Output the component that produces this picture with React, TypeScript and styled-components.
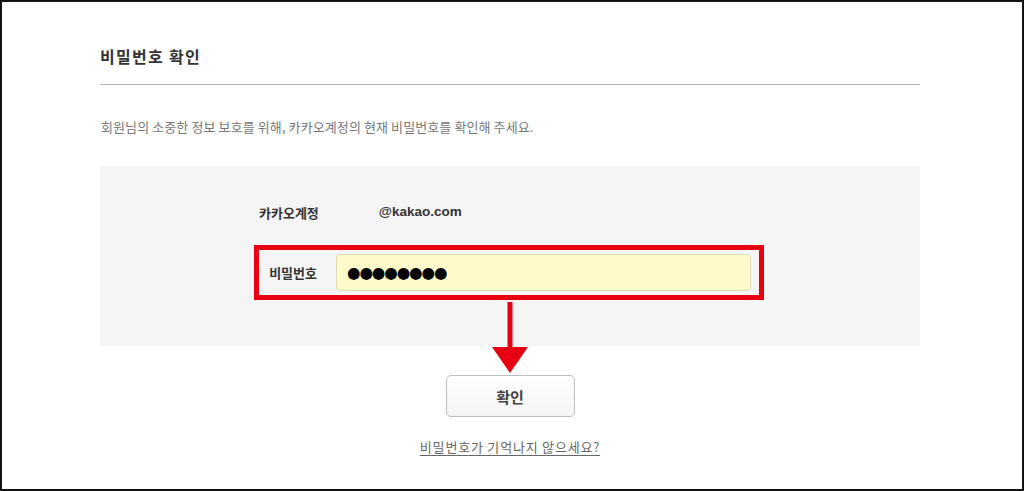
import styled, { createGlobalStyle } from 'styled-components';

const GlobalStyle = createGlobalStyle`
  html, body {
    margin: 0;
    padding: 0;
    background: #ffffff;
  }
  body {
    font-family: "Noto Sans CJK KR", "Noto Sans", sans-serif;
    color: #333;
  }
  * {
    box-sizing: border-box;
  }
`;

const Frame = styled.div`
  width: 1024px;
  height: 491px;
  border: 2px solid #111;
  background: #fff;
  padding: 42px 0 0 98px;
`;

const Content = styled.div`
  width: 820px;
`;

const Title = styled.h2`
  margin: 0;
  font-size: 16px;
  line-height: 24px;
  font-weight: 700;
  letter-spacing: 1.3px;
  color: #333;
`;

const Divider = styled.hr`
  margin: 16px 0 0;
  border: 0;
  border-top: 1px solid #b4b4b4;
  height: 0;
`;

const Description = styled.p`
  margin: 33px 0 0 1px;
  font-size: 13px;
  line-height: 18px;
  letter-spacing: 0.1px;
  color: #777;
`;

const Panel = styled.div`
  position: relative;
  margin-top: 30px;
  height: 180px;
  background: #f5f5f5;
  padding-top: 27px;
  display: flex;
  flex-direction: column;
  align-items: center;
`;

const Form = styled.div`
  width: 510px;
  display: flex;
  flex-direction: column;
  gap: 14px;
  margin-left: -2px;
`;

const Row = styled.div<{ $highlight?: boolean }>`
  display: flex;
  align-items: center;
  border: 5px solid ${({ $highlight }) => ($highlight ? '#e60012' : 'transparent')};
  padding: 4px 8px 4px 0;
`;

const Label = styled.div`
  flex: 0 0 58px;
  display: flex;
  justify-content: flex-end;
  white-space: nowrap;
  font-size: 13px;
  font-weight: 700;
  color: #333;
`;

const Value = styled.div`
  margin-left: 60px;
  font-family: "Liberation Sans", Arial, sans-serif;
  font-size: 13.5px;
  font-weight: 700;
  color: #333;
  line-height: 20px;
`;

const PasswordBox = styled.div`
  flex: 1;
  margin-left: 19px;
  height: 37px;
  background: #fefbc8;
  border: 1px solid #dedcb8;
  border-radius: 4px;
  display: flex;
  align-items: center;
  padding-left: 10px;
  font-family: "DejaVu Sans", sans-serif;
  font-size: 15.5px;
  color: #000;
  letter-spacing: -1.1px;
`;

const Arrow = styled.svg`
  position: absolute;
  left: 50%;
  top: 136px;
  transform: translateX(-50%);
`;

const Actions = styled.div`
  display: flex;
  flex-direction: column;
  align-items: center;
`;

const ConfirmButton = styled.button`
  margin-top: 29px;
  width: 129px;
  height: 42px;
  border: 1px solid #bdbdbd;
  border-radius: 5px;
  background: linear-gradient(#ffffff, #f4f4f4);
  font-family: "Noto Sans CJK KR", sans-serif;
  font-size: 15px;
  font-weight: 700;
  color: #444;
  cursor: pointer;
`;

const ForgotLink = styled.a`
  margin-top: 21px;
  font-size: 13px;
  line-height: 18px;
  letter-spacing: 0.8px;
  color: #666;
  text-decoration: underline;
  text-underline-offset: 3px;
`;

export default function App() {
  return (
    <>
      <GlobalStyle />
      <Frame>
        <Content>
          <Title>비밀번호 확인</Title>
          <Divider />
          <Description>
            회원님의 소중한 정보 보호를 위해, 카카오계정의 현재 비밀번호를 확인해 주세요.
          </Description>
          <Panel>
            <Form>
              <Row>
                <Label>카카오계정</Label>
                <Value>@kakao.com</Value>
              </Row>
              <Row $highlight>
                <Label>비밀번호</Label>
                <PasswordBox>●●●●●●●●</PasswordBox>
              </Row>
            </Form>
            <Arrow width="36" height="72" viewBox="0 0 36 72">
              <rect x="15.5" y="0" width="5" height="46" fill="#e60012" />
              <polygon points="0,45 36,45 18,71" fill="#e60012" />
            </Arrow>
          </Panel>
          <Actions>
            <ConfirmButton type="button">확인</ConfirmButton>
            <ForgotLink href="#">비밀번호가 기억나지 않으세요?</ForgotLink>
          </Actions>
        </Content>
      </Frame>
    </>
  );
}
